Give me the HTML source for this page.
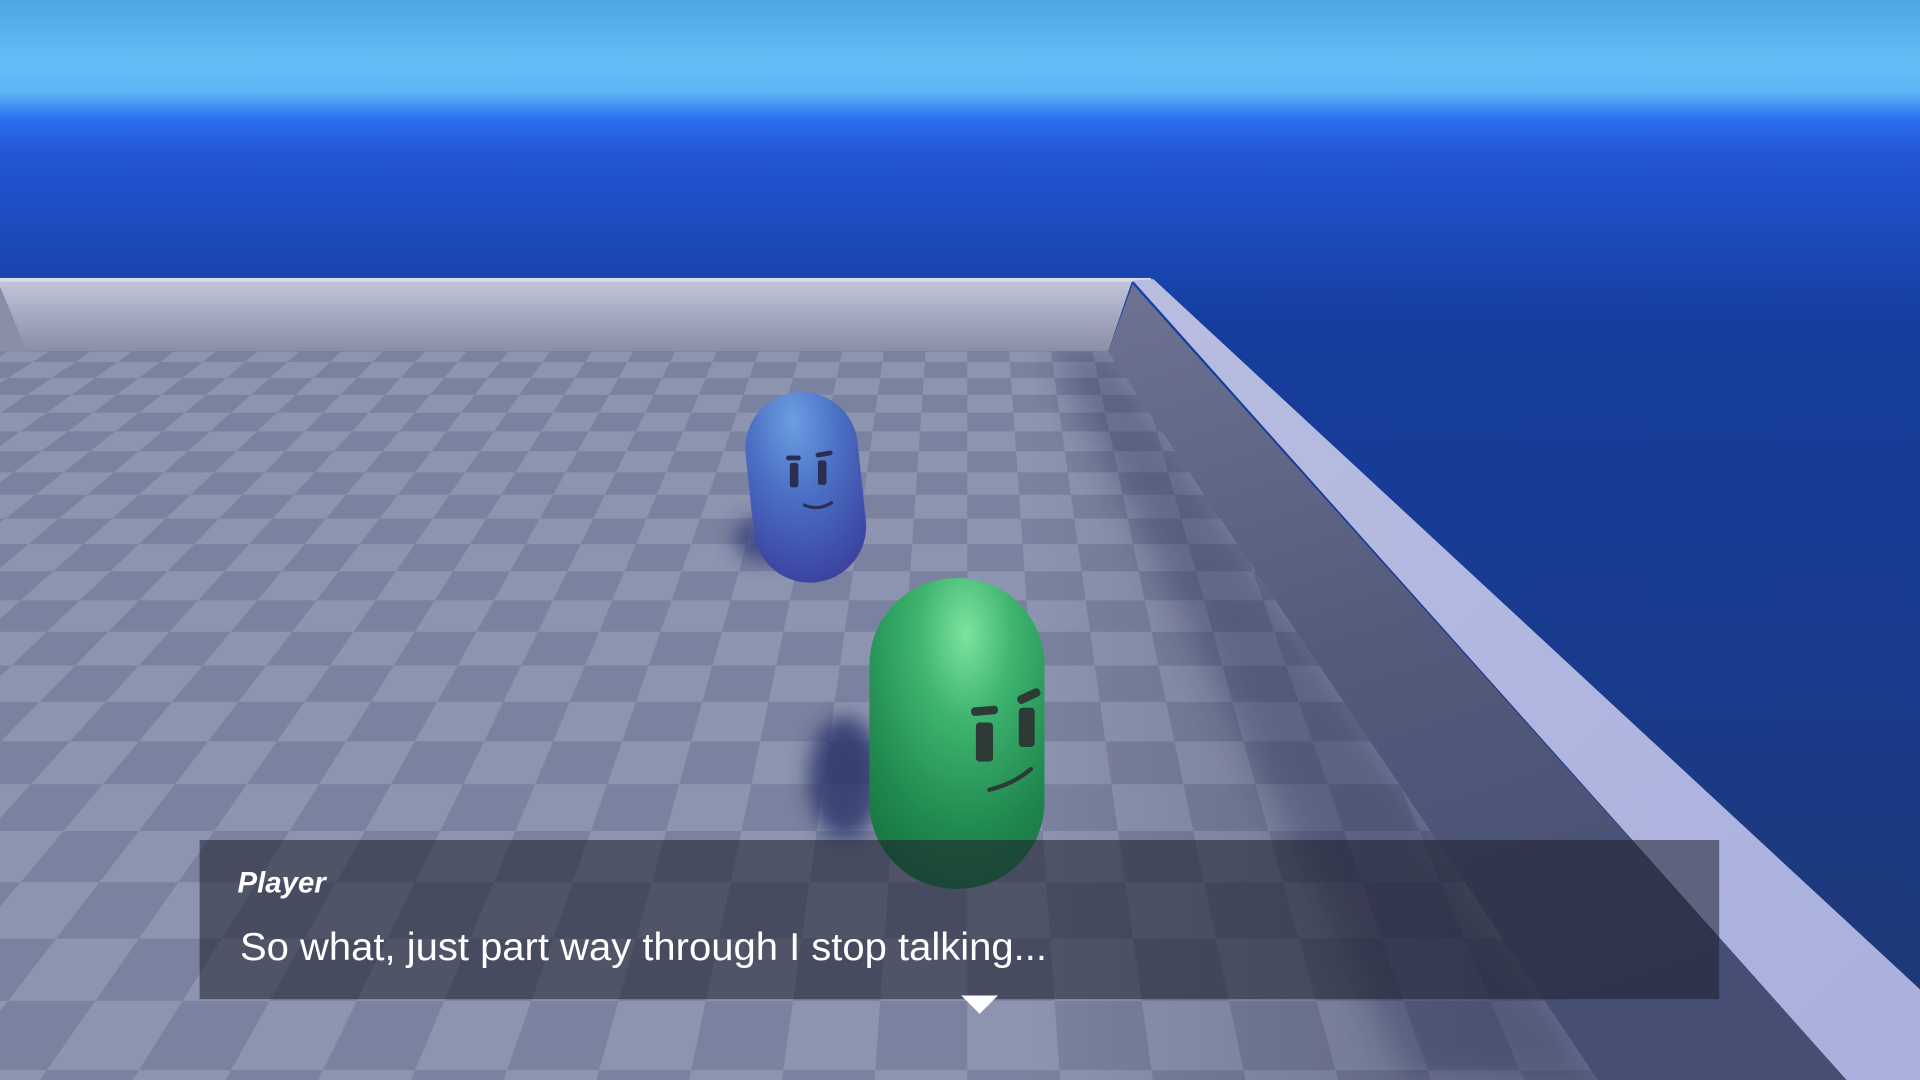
<!DOCTYPE html>
<html><head><meta charset="utf-8"><style>
html,body{margin:0;padding:0;width:1920px;height:1080px;overflow:hidden;background:#1d3a88}
svg{display:block;position:absolute;left:0;top:0}
</style></head><body>
<svg id="s" width="1920" height="1080" viewBox="0 0 1568 882" preserveAspectRatio="none" xmlns="http://www.w3.org/2000/svg">
<defs>
<linearGradient id="sky" x1="0" y1="0" x2="0" y2="1">
<stop offset="0" stop-color="#4ea6e2"/>
<stop offset="0.06" stop-color="#66bdf6"/>
<stop offset="0.085" stop-color="#5fb4f6"/>
<stop offset="0.11" stop-color="#2c6ff0"/>
<stop offset="0.14" stop-color="#2356d6"/>
<stop offset="0.3" stop-color="#163d9e"/>
<stop offset="0.6" stop-color="#183b8e"/>
<stop offset="1" stop-color="#203870"/>
</linearGradient>
<linearGradient id="backwall" x1="0" y1="0" x2="0" y2="1">
<stop offset="0" stop-color="#c4c7dc"/>
<stop offset="0.5" stop-color="#a6aac0"/>
<stop offset="1" stop-color="#8b8fa6"/>
</linearGradient>
<linearGradient id="rface" x1="0" y1="0" x2="0.3" y2="1">
<stop offset="0" stop-color="#6e7392"/>
<stop offset="0.5" stop-color="#545b7c"/>
<stop offset="1" stop-color="#464e74"/>
</linearGradient>
<linearGradient id="rtop" x1="0" y1="0" x2="1" y2="1">
<stop offset="0" stop-color="#b8bde0"/>
<stop offset="1" stop-color="#a9b0de"/>
</linearGradient>
<linearGradient id="fshade" x1="0" y1="0" x2="1" y2="0">
<stop offset="0" stop-color="#000" stop-opacity="0"/>
<stop offset="0.6" stop-color="#000" stop-opacity="0"/>
<stop offset="1" stop-color="#101840" stop-opacity="0.35"/>
</linearGradient>
<radialGradient id="gblue" cx="0.45" cy="0.15" r="0.9">
<stop offset="0" stop-color="#6d9ee0"/>
<stop offset="0.45" stop-color="#4a6fc4"/>
<stop offset="1" stop-color="#3a3f9c"/>
</radialGradient>
<radialGradient id="ggreen" cx="0.55" cy="0.18" r="0.9">
<stop offset="0" stop-color="#7ee3a0"/>
<stop offset="0.3" stop-color="#3fb570"/>
<stop offset="0.7" stop-color="#218a50"/>
<stop offset="1" stop-color="#16703e"/>
</radialGradient>
<filter id="blur" x="-50%" y="-50%" width="200%" height="200%"><feGaussianBlur stdDeviation="8"/></filter>
<filter id="blur2" x="-50%" y="-50%" width="200%" height="200%"><feGaussianBlur stdDeviation="14"/></filter>
<clipPath id="floorclip"><polygon points="0,287 905,287 1305,882 0,882"/></clipPath>
</defs>
<rect width="1568" height="882" fill="url(#sky)"/>
<g clip-path="url(#floorclip)">
<rect x="0" y="280" width="1400" height="602" fill="#7b829f"/>
<g id="checks"></g>
<rect x="0" y="280" width="1400" height="602" fill="url(#fshade)"/>
<polygon points="905,287 1305,882 1150,882 860,287" fill="#1c2450" opacity="0.3" filter="url(#blur2)"/>
</g>
<polygon points="0,228 925,228 905,287 0,287" fill="url(#backwall)"/>
<polygon points="0,234 22,287 0,287" fill="#8a8ea6"/>
<rect x="0" y="227" width="940" height="3" fill="#d8dbe8"/>
<polygon points="925,232 905,287 1305,882 1508,882" fill="url(#rface)"/>
<polygon points="925,229 942,228 1568,808 1568,882 1508,882" fill="url(#rtop)"/>
<ellipse cx="625" cy="440" rx="26" ry="18" fill="#2c3672" opacity="0.7" filter="url(#blur)"/>
<ellipse cx="690" cy="635" rx="30" ry="50" fill="#263068" opacity="0.8" filter="url(#blur)"/>
<g transform="rotate(-6 658 398)">
<rect x="612" y="320" width="92" height="156" rx="46" fill="url(#gblue)"/>
</g>
<g fill="#2a2e50">
<rect x="645" y="378" width="7" height="20" rx="2"/><rect x="668" y="376" width="7" height="20" rx="2"/>
<rect x="642" y="372" width="12" height="4" rx="2"/><rect x="666" y="369" width="14" height="4" rx="2" transform="rotate(-10 672 371)"/>
</g>
<path d="M656,412 Q668,418 680,410" stroke="#2a2e50" stroke-width="2.5" fill="none"/>
<rect x="710" y="472" width="143" height="254" rx="71" fill="url(#ggreen)"/>
<g fill="#2d3a36">
<rect x="797" y="590" width="14" height="32" rx="3"/><rect x="832" y="578" width="13" height="32" rx="3"/>
<rect x="793" y="577" width="22" height="7" rx="3" transform="rotate(-5 804 580)"/>
<rect x="830" y="565" width="20" height="7" rx="3" transform="rotate(-25 840 568)"/>
</g>
<path d="M808,645 Q828,640 842,628" stroke="#2d3a36" stroke-width="3.5" fill="none" stroke-linecap="round"/>
<rect x="163" y="686" width="1241" height="130" fill="#1e1f2c" fill-opacity="0.55"/>
<text x="194" y="729" font-family="Liberation Sans, sans-serif" font-size="24" font-weight="bold" font-style="italic" fill="#fff">Player</text>
<text x="196" y="784" font-family="Liberation Sans, sans-serif" font-size="32" fill="#fff" textLength="659" lengthAdjust="spacingAndGlyphs">So what, just part way through I stop talking...</text>
<polygon points="785,813 815,813 800,828" fill="#fff"/>
</svg>
<script>
(function(){
var g=document.getElementById('checks');
var H=-200,A=19330,w=0.07,vx=790;
function Y(z){return H+A/z;}
var zTop=A/(287-H),zBot=A/(900-H);
var html='';
var z0=Math.floor(zBot)-1;
for(var j=z0;j<zTop+1;j++){
 var ya=Y(j),yb=Y(j+1);
 var sa=(ya-H)*w,sb=(yb-H)*w;
 for(var i=-40;i<40;i++){
  if(((i+j)%2+2)%2) continue;
  var x1=vx+i*sa,x2=vx+(i+1)*sa,x3=vx+(i+1)*sb,x4=vx+i*sb;
  html+='<polygon points="'+x1+','+ya+' '+x2+','+ya+' '+x3+','+yb+' '+x4+','+yb+'"/>';
 }
}
g.setAttribute('fill','#8d94b0');
g.innerHTML=html;
})();
</script>
</body></html>
